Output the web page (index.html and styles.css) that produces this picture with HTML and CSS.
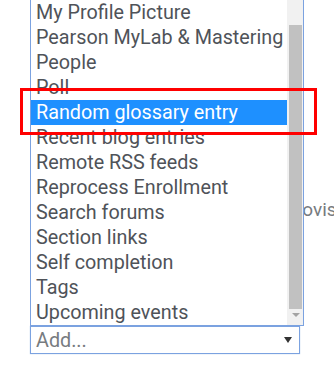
FILE: index.html
```html
<!DOCTYPE html>
<html lang="en">
<head>
  <meta charset="UTF-8">
  <title>Add a block</title>
  <link rel="stylesheet" href="styles.css">
</head>
<body>
  <div class="page">
    <p class="behind-text">Provis</p>

    <div class="add-select">
      <span class="add-label">Add...</span>
      <span class="select-arrow"></span>
    </div>

    <!-- opened dropdown of the select -->
    <div class="dropdown">
      <ul class="options">
        <li>My Profile Picture</li>
        <li>Pearson MyLab &amp; Mastering</li>
        <li>People</li>
        <li>Poll</li>
        <li class="selected">Random glossary entry</li>
        <li>Recent blog entries</li>
        <li>Remote RSS feeds</li>
        <li>Reprocess Enrollment</li>
        <li>Search forums</li>
        <li>Section links</li>
        <li>Self completion</li>
        <li>Tags</li>
        <li>Upcoming events</li>
      </ul>
      <div class="scrollbar">
        <div class="scroll-thumb"></div>
        <span class="scroll-down"></span>
      </div>
    </div>

    <div class="highlight-box"></div>
  </div>
</body>
</html>
```

FILE: styles.css
```css
:root {
  --text: #4f5359;
  --muted: #777b80;
  --border-blue: #7ba2e0;
  --selected: #1e90ff;
  --track: #f1f1f1;
  --thumb: #c1c1c1;
  --mark: #ff0000;
}

body {
  margin: 0;
  padding: 0;
  font-family: Roboto, "Liberation Sans", sans-serif;
  background: #ffffff;
  color: var(--text);
}

.page {
  position: relative;
  width: 334px;
  height: 367px;
  overflow: hidden;
  padding-top: 199px;
  box-sizing: border-box;
}

/* text of the form under the popup */
.behind-text {
  margin: 0;
  padding-left: 284px;
  font-size: 19px;
  line-height: 22px;
  color: var(--muted);
  white-space: nowrap;
}

.add-select {
  display: flex;
  align-items: center;
  justify-content: space-between;
  width: 270px;
  height: 28px;
  margin: 105px 0 0 30px;
  padding: 0 7px 0 5px;
  box-sizing: border-box;
  border: 1px solid var(--border-blue);
  box-shadow: 0 0 1px rgba(90, 140, 220, 0.5);
}

.add-label {
  font-size: 19.75px;
  color: var(--muted);
}

.select-arrow {
  width: 0;
  height: 0;
  border-left: 4px solid transparent;
  border-right: 4px solid transparent;
  border-top: 6px solid #333333;
}

.dropdown {
  position: absolute;
  left: 30px;
  top: -1px;
  width: 274px;
  height: 327px;
  box-sizing: border-box;
  border: 1px solid var(--border-blue);
  background: #ffffff;
  display: flex;
}

.options {
  list-style: none;
  margin: 0;
  padding: 0;
  flex: 1;
}

.options li {
  height: 25px;
  line-height: 25px;
  padding-left: 5px;
  font-size: 19.75px;
  white-space: nowrap;
  overflow: hidden;
}

.options li.selected {
  background: var(--selected);
  color: #ffffff;
}

.scrollbar {
  position: relative;
  width: 16px;
  background: var(--track);
}

.scroll-thumb {
  margin: 25px 1px 0 2px;
  height: 284px;
  background: var(--thumb);
}

.scroll-down {
  position: absolute;
  left: 5px;
  bottom: 8px;
  width: 0;
  height: 0;
  border-left: 4px solid transparent;
  border-right: 4px solid transparent;
  border-top: 4px solid #a3a3a3;
}

/* red annotation */
.highlight-box {
  position: absolute;
  left: 20px;
  top: 88px;
  width: 297px;
  height: 47px;
  box-sizing: border-box;
  border: 3px solid var(--mark);
}
```
